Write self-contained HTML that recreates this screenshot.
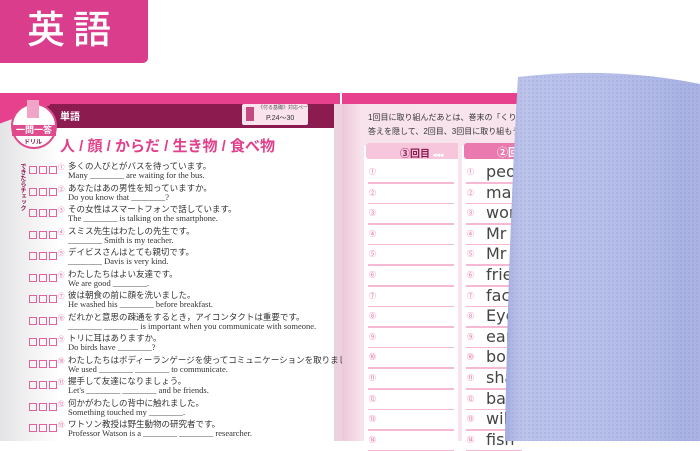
<!DOCTYPE html>
<html><head><meta charset="utf-8"><style>
*{margin:0;padding:0;box-sizing:border-box}
body{width:700px;height:441px;overflow:hidden;background:#fff;position:relative;font-family:"Liberation Sans","Noto Sans CJK JP",sans-serif}
.abs{position:absolute}
.badge{left:0;top:0;width:148px;height:63px;background:#d93d8c;border-radius:0 0 5px 0;color:#fff;font-size:38px;line-height:63px;padding-left:27px;letter-spacing:8px;font-weight:500}
.jp{font-size:8.5px;color:#333;white-space:nowrap}
.en{font-family:"Liberation Serif",serif;font-size:8.5px;color:#333;white-space:nowrap}
.box{width:8px;height:8px;border:1.3px solid #e2629c;display:inline-block;margin-right:2px}
.num{font-size:6.5px;color:#e2629c}
.line{height:1.5px;background:#f6b8d3}
.hw{font-family:"DejaVu Sans",sans-serif;font-size:16px;color:#444;white-space:nowrap}
.cn{font-size:7px;color:#e7639f}
</style></head><body>
<div class="abs badge">英語</div>
<div class="abs" style="left:0;top:93px;width:340px;height:348px;background:linear-gradient(90deg,#e4e4e6 0,#fff 60px)"></div>
<div class="abs" style="left:0;top:93px;width:340px;height:11px;background:#e7408c"></div>
<div class="abs" style="left:40px;top:104px;width:300px;height:24px;background:#8c1b50"></div>
<div class="abs" style="left:0;top:104px;width:50px;height:30px;background:linear-gradient(160deg,#e7408c 40%,transparent 41%)"></div>
<div class="abs" style="left:60px;top:108px;color:#fff;font-size:10px;font-weight:bold">単語</div>
<div class="abs" style="left:242px;top:104px;width:66px;height:21px;background:#fbe3ee;border-radius:2px"></div>
<div class="abs" style="left:246px;top:107px;width:8px;height:14px;background:#c44a82"></div>
<div class="abs" style="left:258px;top:104px;font-size:5px;color:#555">《付る基礎》対応ページ</div>
<div class="abs" style="left:266px;top:113px;font-size:7px;color:#333">P.24～30</div>
<div class="abs" style="left:11px;top:103px;width:46px;height:46px;border-radius:50%;background:#fff;border:2px solid #e04b8e"></div>
<div class="abs" style="left:27px;top:100px;width:12px;height:18px;background:#f0a5c6"></div>
<div class="abs" style="left:12px;top:125px;width:44px;height:11px;background:#e04b8e;color:#fff;font-size:9px;font-weight:bold;text-align:center;line-height:11px">一問一答</div>
<div class="abs" style="left:24px;top:137px;font-size:6px;color:#8c1b50;font-weight:bold">ドリル</div>
<div class="abs" style="left:60px;top:135px;font-size:15px;color:#e2408a;font-weight:bold;white-space:nowrap">人 / 顔 / からだ / 生き物 / 食べ物</div>
<div class="abs" style="left:19px;top:163px;width:8px;font-size:6px;color:#8c1b50;writing-mode:vertical-rl;font-weight:bold">できたらチェック</div>
<div class="abs" style="left:334px;top:104px;width:8px;height:337px;background:#ecd2de"></div>
<div id="rows"></div>
<div class="abs" style="left:342px;top:93px;width:358px;height:348px;background:linear-gradient(90deg,#ecc8d8 0,#f8e3ec 20px,#f9e5ee 100%)"></div>
<div class="abs" style="left:342px;top:93px;width:358px;height:11px;background:#e7408c"></div>
<div class="abs jp" style="left:368px;top:112px;font-size:8px">1回目に取り組んだあとは、巻末の「くりかえし</div>
<div class="abs jp" style="left:368px;top:126px;font-size:8px">答えを隠して、2回目、3回目に取り組もう！</div>
<div class="abs" style="left:364px;top:146px;width:94px;height:295px;background:#fff"></div>
<div class="abs" style="left:462px;top:146px;width:60px;height:295px;background:#fff"></div>
<div class="abs" style="left:366px;top:143px;width:92px;height:16px;background:#f7c5dc;border-radius:3px 0 0 3px"></div>
<div class="abs" style="left:464px;top:143px;width:58px;height:16px;background:#e979ae;border-radius:3px 0 0 3px"></div>
<div class="abs" style="left:400px;top:145px;font-size:10px;color:#8c1b50;font-weight:bold">③回目 <span style="font-size:7px;color:#fff">◂◂◂</span></div>
<div class="abs" style="left:497px;top:144px;font-size:11px;color:#fff;font-weight:bold">②回</div>
<div id="rrows"></div>
<svg class="abs" style="left:0;top:0" width="700" height="441">
<defs><pattern id="p" width="4" height="4" patternUnits="userSpaceOnUse"><rect width="4" height="4" fill="#b3bce8"/><rect width="2" height="2" fill="#a6b0e2"/></pattern>
<linearGradient id="g" x1="0" x2="1"><stop offset="0" stop-color="#8e99d6" stop-opacity=".5"/><stop offset=".15" stop-color="#fff" stop-opacity=".08"/><stop offset=".9" stop-color="#8e99d6" stop-opacity=".25"/></linearGradient></defs>
<path d="M518,77 Q610,66 700,84 L700,441 L505,441 Q508,250 518,77 Z" fill="url(#p)"/>
<path d="M518,77 Q610,66 700,84 L700,441 L505,441 Q508,250 518,77 Z" fill="url(#g)"/>
</svg>
<script>
var L=[["多くの人びとがバスを待っています。","Many ________ are waiting for the bus."],["あなたはあの男性を知っていますか。","Do you know that ________?"],["その女性はスマートフォンで話しています。","The ________ is talking on the smartphone."],["スミス先生はわたしの先生です。","________ Smith is my teacher."],["デイビスさんはとても親切です。","________ Davis is very kind."],["わたしたちはよい友達です。","We are good ________."],["彼は朝食の前に顔を洗いました。","He washed his ________ before breakfast."],["だれかと意思の疎通をするとき，アイコンタクトは重要です。","________ ________ is important when you communicate with someone."],["トリに耳はありますか。","Do birds have ________?"],["わたしたちはボディーランゲージを使ってコミュニケーションを取りました。","We used ________ ________ to communicate."],["握手して友達になりましょう。","Let's ________ ________ and be friends."],["何かがわたしの背中に触れました。","Something touched my ________."],["ワトソン教授は野生動物の研究者です。","Professor Watson is a ________ ________ researcher."]];
var n="①②③④⑤⑥⑦⑧⑨⑩⑪⑫⑬⑭";var h="";
L.forEach(function(r,i){var y=160+i*21.5;h+='<div class="abs" style="left:29px;top:'+(y+1)+'px"><span class="box"></span><span class="box"></span><span class="box"></span></div><div class="abs num" style="left:58px;top:'+(y+1)+'px">'+n[i]+'</div><div class="abs jp" style="left:68px;top:'+y+'px">'+r[0]+'</div><div class="abs en" style="left:68px;top:'+(y+10)+'px">'+r[1]+'</div>';});
document.getElementById('rows').outerHTML=h;
var W=["people","man","woman","Mr","Mr","friend","face","Eye","ear","body","shake","back","wild","fish"];h="";
for(var i=0;i<14;i++){var y=164+i*20.6;h+='<div class="abs cn" style="left:369px;top:'+(y+3)+'px">'+n[i]+'</div><div class="abs cn" style="left:467px;top:'+(y+3)+'px">'+n[i]+'</div><div class="abs hw" style="left:486px;top:'+(y-2)+'px">'+W[i]+'</div><div class="abs line" style="left:368px;top:'+(y+18)+'px;width:86px"></div><div class="abs line" style="left:466px;top:'+(y+18)+'px;width:56px"></div>';}
document.getElementById('rrows').outerHTML=h;
</script>
</body></html>
